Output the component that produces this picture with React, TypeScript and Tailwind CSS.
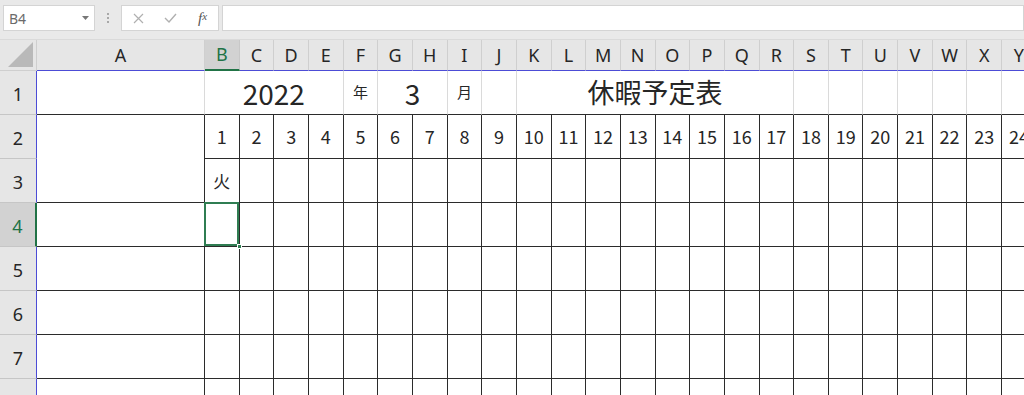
import React from 'react';

const LETTERS = 'BCDEFGHIJKLMNOPQRSTUVWXYZ'.split('');

const ColHeader = ({ label, active }: { label: string; active?: boolean }) =>
  active ? (
    <div className="flex items-center justify-center bg-[#d2d2d2] text-[#217346] border-r border-r-[#c8c8c8] border-b-2 border-b-[#217346] text-[18px]">
      {label}
    </div>
  ) : (
    <div className="flex items-center justify-center bg-[#e6e6e6] text-[#262626] border-r border-r-[#cfcfcf] border-b border-b-[#4c4cd6] text-[18px]">
      {label}
    </div>
  );

const RowHeader = ({ n, active }: { n: number; active?: boolean }) =>
  active ? (
    <div className="flex items-center justify-center bg-[#d2d2d2] text-[#217346] border-b border-b-[#c6c6c6] border-r-2 border-r-[#217346] text-[18px] pt-[4px]">
      {n}
    </div>
  ) : (
    <div className="flex items-center justify-center bg-[#e6e6e6] text-[#262626] border-b border-b-[#c6c6c6] border-r border-r-[#4c4cd6] text-[18px] pt-[4px]">
      {n}
    </div>
  );

// normal bordered cell (black grid of the schedule)
const Cell = ({ children }: { children?: React.ReactNode }) => (
  <div className="flex items-center justify-center border-r border-b border-[#2b2b2b] text-[18px] text-[#262626]">
    {children}
  </div>
);

const App = () => {
  return (
    <div className="w-[1024px] h-[395px] overflow-hidden bg-white font-['Noto_Sans',sans-serif]">
      {/* formula bar */}
      <div className="h-[40px] bg-[#e9e9e9] flex items-start pt-[5px] border-b border-b-[#dadada]">
        <div className="ml-[3px] w-[92px] h-[26px] bg-white border border-[#d4d4d4] flex items-center justify-between pl-[5px] pr-[5px]">
          <span className="text-[14px] text-[#6b6b6b]">B4</span>
          <svg width="7" height="4" viewBox="0 0 7 4">
            <path d="M0 0 L7 0 L3.5 4 Z" fill="#777" />
          </svg>
        </div>
        <div className="w-[26px] h-[26px] flex flex-col items-center justify-center gap-[2px]">
          <span className="w-[2px] h-[2px] bg-[#a8a8a8]" />
          <span className="w-[2px] h-[2px] bg-[#a8a8a8]" />
          <span className="w-[2px] h-[2px] bg-[#a8a8a8]" />
        </div>
        <div className="w-[98px] h-[26px] bg-white border border-[#d4d4d4] flex items-center">
          <div className="w-[32px] flex justify-center">
            <svg width="11" height="11" viewBox="0 0 11 11">
              <path d="M1 1 L10 10 M10 1 L1 10" stroke="#b0b0b0" strokeWidth="1.2" />
            </svg>
          </div>
          <div className="w-[33px] flex justify-center">
            <svg width="13" height="10" viewBox="0 0 13 10">
              <path d="M1 5 L5 9 L12 1" stroke="#b0b0b0" strokeWidth="1.4" fill="none" />
            </svg>
          </div>
          <div className="w-[31px] flex justify-center font-['Liberation_Serif',serif] italic text-[#555] text-[15px] leading-none">
            f<span className="text-[11px]">x</span>
          </div>
        </div>
        <div className="ml-[3px] flex-1 h-[26px] bg-white border border-[#d4d4d4]" />
      </div>

      {/* sheet */}
      <div className="grid grid-cols-[37px_168px_repeat(25,34.667px)] grid-rows-[31px_repeat(8,44px)]">
        {/* column header row */}
        <div className="relative bg-[#e6e6e6] border-r border-b border-[#cfcfcf]">
          <svg className="absolute right-[3px] bottom-[3px]" width="25" height="25" viewBox="0 0 25 25">
            <path d="M25 0 L25 25 L0 25 Z" fill="#b9b9b9" />
          </svg>
        </div>
        <ColHeader label="A" />
        {LETTERS.map((l) => (
          <ColHeader key={l} label={l} active={l === 'B'} />
        ))}

        {/* row 1 */}
        <RowHeader n={1} />
        <div className="border-r border-r-[#dadada] border-b border-b-[#2b2b2b]" />
        <div className="col-span-4 flex items-center justify-center border-r border-r-[#dadada] border-b border-b-[#2b2b2b] text-[28px] text-[#262626] font-['Noto_Sans_CJK_JP',sans-serif]">
          2022
        </div>
        <div className="flex items-center justify-center border-r border-r-[#dadada] border-b border-b-[#2b2b2b] text-[15px] text-[#262626] font-['Noto_Sans_CJK_JP',sans-serif]">
          年
        </div>
        <div className="col-span-2 flex items-center justify-center border-r border-r-[#dadada] border-b border-b-[#2b2b2b] text-[28px] text-[#262626] font-['Noto_Sans_CJK_JP',sans-serif]">
          3
        </div>
        <div className="flex items-center justify-center border-r border-r-[#dadada] border-b border-b-[#2b2b2b] text-[15px] text-[#262626] font-['Noto_Sans_CJK_JP',sans-serif]">
          月
        </div>
        <div className="border-r border-r-[#dadada] border-b border-b-[#2b2b2b]" />
        <div className="col-span-8 flex items-center justify-center border-r border-r-[#dadada] border-b border-b-[#2b2b2b] text-[27px] text-[#262626] font-['Noto_Sans_CJK_JP',sans-serif]">
          休暇予定表
        </div>
        {LETTERS.slice(17).map((l) => (
          <div key={l} className="border-r border-r-[#dadada] border-b border-b-[#2b2b2b]" />
        ))}

        {/* row 2 */}
        <RowHeader n={2} />
        <div className="row-span-2 border-r border-b border-[#2b2b2b]" />
        {LETTERS.map((l, i) => (
          <div key={l} className="flex items-center justify-center border-r border-b border-[#2b2b2b] text-[18px] text-[#262626] font-['Noto_Sans_CJK_JP',sans-serif]">
            {i + 1}
          </div>
        ))}

        {/* row 3 */}
        <RowHeader n={3} />
        {LETTERS.map((l) => (
          <div key={l} className="flex items-center justify-center border-r border-b border-[#2b2b2b] text-[17px] text-[#262626] font-['Noto_Sans_CJK_JP',sans-serif]">
            {l === 'B' ? '火' : ''}
          </div>
        ))}

        {/* row 4, B4 selected */}
        <RowHeader n={4} active />
        <Cell />
        <div className="relative border-r border-b border-[#2b2b2b]">
          <div className="absolute -left-px -top-px right-0 bottom-0 border-2 border-[#2f7d52]" />
          <div className="absolute -right-[3px] -bottom-[3px] w-[5px] h-[5px] bg-[#2f7d52] border border-white" />
        </div>
        {LETTERS.slice(1).map((l) => (
          <Cell key={l} />
        ))}

        {[5, 6, 7, 8].map((n) => (
          <React.Fragment key={n}>
            <RowHeader n={n} />
            <Cell />
            {LETTERS.map((l) => (
              <Cell key={l} />
            ))}
          </React.Fragment>
        ))}
      </div>
    </div>
  );
};

export default App;
